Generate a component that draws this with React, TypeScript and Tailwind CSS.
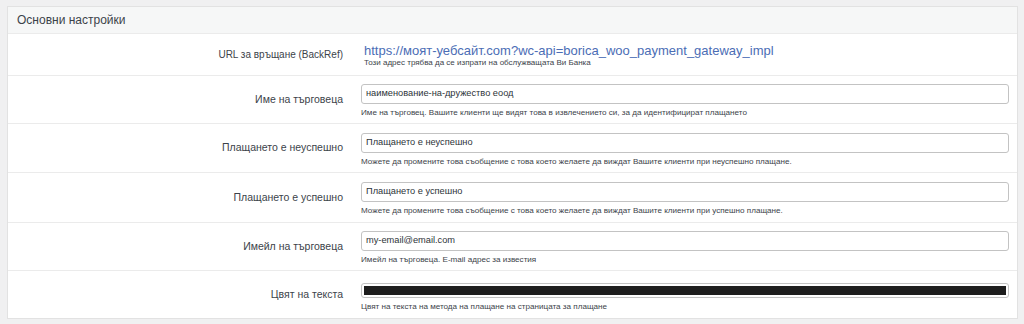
import React from "react"

// ── Полета на формата ─────────────────────────────────────────
type Field = {
  label: string
  value?: string
  desc: string
  kind: "url" | "text" | "color"
  h: string
}

const FIELDS: Field[] = [
  {
    label: "URL за връщане (BackRef)",
    value: "https://моят-уебсайт.com?wc-api=borica_woo_payment_gateway_impl",
    desc: "Този адрес трябва да се изпрати на обслужващата Ви Банка",
    kind: "url",
    h: "h-[42px]",
  },
  {
    label: "Име на търговеца",
    value: "наименование-на-дружество еоод",
    desc: "Име на търговец. Вашите клиенти ще видят това в извлечението си, за да идентифицират плащането",
    kind: "text",
    h: "h-[48px]",
  },
  {
    label: "Плащането е неуспешно",
    value: "Плащането е неуспешно",
    desc: "Можете да промените това съобщение с това което желаете да виждат Вашите клиенти при неуспешно плащане.",
    kind: "text",
    h: "h-[49px]",
  },
  {
    label: "Плащането е успешно",
    value: "Плащането е успешно",
    desc: "Можете да промените това съобщение с това което желаете да виждат Вашите клиенти при успешно плащане.",
    kind: "text",
    h: "h-[50px]",
  },
  {
    label: "Имейл на търговеца",
    value: "my-email@email.com",
    desc: "Имейл на търговеца. E-mail адрес за известия",
    kind: "text",
    h: "h-[48px]",
  },
  {
    label: "Цвят на текста",
    desc: "Цвят на текста на метода на плащане на страницата за плащане",
    kind: "color",
    h: "h-[48px]",
  },
]

function FieldRow({ field }: { field: Field }) {
  if (field.kind === "url") {
    return (
      <div className={`flex items-center border-t border-[#ebebeb] ${field.h}`}>
        <div className="w-[335px] shrink-0 text-right text-[10px] text-[#3c434a]">{field.label}</div>
        <div className="ml-[21px] flex-1 pr-2 pt-[1px]">
          <p className="text-[13px] leading-[15px] text-[#4b6db5]">{field.value}</p>
          <p className="text-[8px] leading-[10px] text-[#3c434a]">{field.desc}</p>
        </div>
      </div>
    )
  }

  return (
    <div className={`flex items-center border-t border-[#ebebeb] ${field.h}`}>
      <div className="w-[335px] shrink-0 text-right text-[10.5px] text-[#3c434a]">{field.label}</div>
      <div className="ml-[18px] flex-1 pr-[8px] pt-[3px]">
        {field.kind === "color" ? (
          <div className="mt-[3px] h-[15px] rounded-[3px] border border-[#c3c3c3] bg-white p-[2px]">
            <div className="h-full bg-[#1e1e1e]" />
          </div>
        ) : (
          <div className="h-[20px] rounded-[3px] border border-[#c3c3c3] bg-white px-[4px] flex items-center text-[9.25px] text-[#2c3338]">
            {field.value}
          </div>
        )}
        <p className="mt-[3px] text-[8.1px] leading-[11px] text-[#3c434a]">{field.desc}</p>
      </div>
    </div>
  )
}

export default function App() {
  return (
    <div className="w-[1024px] h-[324px] bg-[#f0f0f1] p-[6px] font-['Liberation_Sans','Noto_Sans',sans-serif]">
      <div className="ml-[1px] border border-[#e2e2e2] bg-white">
        {/* заглавие на секцията */}
        <div className="h-[26px] bg-[#f6f7f7] px-[9px] flex items-center text-[12px] text-[#3c434a]">
          Основни настройки
        </div>
        {FIELDS.map(f => (
          <FieldRow key={f.label} field={f} />
        ))}
      </div>
    </div>
  )
}
